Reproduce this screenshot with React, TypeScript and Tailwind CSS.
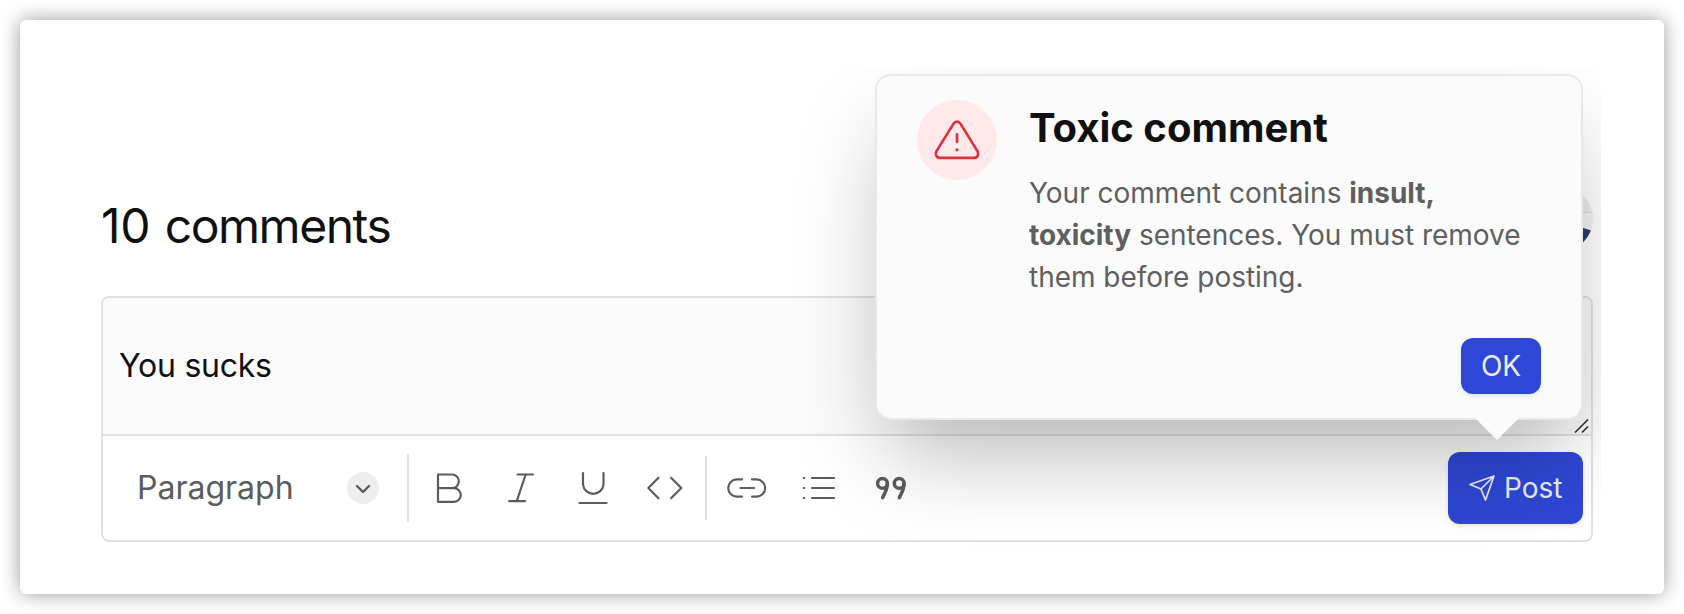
import React from "react";

const ico = "block h-[42px] w-[42px] shrink-0";

function Svg({ children, w = 2.2 }: { children: React.ReactNode; w?: number }) {
  return (
    <svg className={ico} viewBox="0 0 42 42" fill="none" stroke="currentColor" strokeWidth={w} strokeLinecap="round" strokeLinejoin="round">
      {children}
    </svg>
  );
}

function Toolbar() {
  return (
    <div className="flex h-[104px] items-center text-[#5c5c5c]">
      <div className="flex w-[304px] items-center pl-[34px]">
        <span className="w-[210px] text-[32px] leading-none">Paragraph</span>
        <span className="flex h-8 w-8 items-center justify-center rounded-full bg-[#eeeeee]">
          <svg className="h-8 w-8" viewBox="0 0 32 32" fill="none" stroke="currentColor" strokeWidth="2.4" strokeLinecap="round" strokeLinejoin="round">
            <path d="M10 14 L16 20 L22 14" />
          </svg>
        </span>
      </div>
      <div className="h-[68px] w-[2px] bg-[#e1e1e1]" />
      <div className="flex items-center gap-[30px] pl-[19px]">
        <Svg>
          <path d="M10 7.5 H24 A6.85 6.85 0 0 1 24 21.2 H10 M24 21.2 H26 A6.8 6.8 0 0 1 26 34.8 H10 V7.5" />
        </Svg>
        <Svg>
          <path d="M17.5 7.5 H33 M9.2 34.2 H25 M25.7 7.5 L16.7 34.2" />
        </Svg>
        <Svg>
          <path d="M11 6 V17.5 A10.3 10.3 0 0 0 31.5 17.5 V6 M7.5 36 H34.5" />
        </Svg>
        <Svg>
          <path d="M14.5 10.8 L4.3 21 L14.5 31.2 M27.1 10.8 L37.3 21 L27.1 31.2" />
        </Svg>
      </div>
      <div className="ml-[19px] h-16 w-[2px] bg-[#e1e1e1]" />
      <div className="flex items-center gap-[30px] pl-[19px]">
        <Svg>
          <path d="M16 12.4 H10.8 A8.6 8.6 0 0 0 10.8 29.6 H16 M26 12.4 H30.6 A8.6 8.6 0 0 1 30.6 29.6 H26 M14.6 21 H28" />
        </Svg>
        <Svg>
          <path d="M14 11 H36 M14 21 H36 M14 31 H36" />
          <path d="M6 11 h0.01 M6 21 h0.01 M6 31 h0.01" strokeLinecap="square" />
        </Svg>
        <Svg w={3.5}>
          <circle cx="12.5" cy="16.4" r="4.9" />
          <path d="M17.4 16.4 C17.4 22 15 26 12.6 30.6" />
          <circle cx="29.2" cy="16.4" r="4.9" />
          <path d="M34.1 16.4 C34.1 22 31.7 26 29.3 30.6" />
        </Svg>
      </div>
      <button className="mr-2 ml-auto flex h-[72px] w-[135px] items-center rounded-[12px] bg-[#2f47d6] pl-[20px] text-[28px] text-white/90 shadow-[0_2px_4px_rgba(0,0,0,0.1)]">
        <svg className="mr-[8px] h-7 w-7" viewBox="0 0 28 28" fill="none" stroke="currentColor" strokeWidth="1.7" strokeLinejoin="round">
          <path d="M26 2 L2 10.5 L13 15 L17.5 26 Z M13 15 L26 2" />
        </svg>
        <span className="leading-none">Post</span>
      </button>
    </div>
  );
}

function Avatar() {
  return (
    <svg className="h-16 w-16 rounded-full" viewBox="0 0 64 64">
      <rect width="64" height="64" fill="#ececec" />
      <rect y="25" width="64" height="39" fill="#f2f5f7" />
      <rect y="25" width="64" height="1" fill="#d6d8da" />
      <path d="M0 38 L54 41 L64 44 V64 H0 Z" fill="#2d3b6b" />
    </svg>
  );
}

function Popover() {
  return (
    <div className="absolute top-[7px] left-[855px] flex h-[346px] w-[708px] rounded-[16px] border-2 border-[#e8e8e8] bg-[#fbfbfb] pt-[24px] pl-[40px] shadow-[0_46px_92px_-15px_rgba(0,0,0,0.29)]">
      <div className="flex h-20 w-20 shrink-0 items-center justify-center rounded-full bg-[#ffe9ea]">
        <svg className="h-12 w-12" viewBox="0 0 48 48" fill="none" stroke="#e02f3f" strokeWidth="2.7" strokeLinecap="round" strokeLinejoin="round">
          <path d="M20.6 7.6 C22.2 5 25.8 5 27.4 7.6 L44.6 35.4 C46.2 38.2 44.6 41.8 41.4 41.8 H6.6 C3.4 41.8 1.8 38.2 3.4 35.4 Z" />
          <path d="M24 18.4 V26" />
          <circle cx="24" cy="33.8" r="1.6" fill="#e02f3f" stroke="none" />
        </svg>
      </div>
      <div className="flex w-[544px] flex-col pl-[32px]">
        <h2 className="mt-[4px] text-[40px] leading-[48px] font-bold text-[#101010]">Toxic comment</h2>
        <p className="mt-[20px] text-[28px] leading-[42px] tracking-[-0.02px] whitespace-nowrap text-[#5f5f5f]">
          Your comment contains <b className="font-bold">insult,</b>
          <br />
          <b className="font-bold">toxicity</b> sentences. You must remove
          <br />
          them before posting.
        </p>
        <button className="mt-[40px] ml-[432px] flex h-14 w-20 shrink-0 items-center justify-center rounded-[12px] bg-[#2f47d6] text-[28px] leading-none text-white/90 shadow-[0_2px_4px_rgba(0,0,0,0.1)]">OK</button>
      </div>
      <svg className="absolute top-[341px] left-[597px] h-[23px] w-[46px]" viewBox="0 0 46 23" fill="#fbfbfb">
        <path d="M0 0 H46 L23 23 Z" />
      </svg>
    </div>
  );
}

export default function App() {
  return (
    <div className="h-[614px] overflow-hidden bg-white p-5 font-['Inter',sans-serif]">
      <main className="h-[574px] rounded-[6px] bg-white pt-[47px] shadow-[0_0_20px_rgba(0,0,0,0.4)]">
        <section className="relative h-[527px] w-[1581px] overflow-hidden pt-[120px] pr-[8px] pl-[81px]">
          <header className="flex h-[85px] items-start justify-between">
            <h1 className="pt-[10px] text-[48px] leading-[58px] tracking-[-1.45px] text-[#101010] [word-spacing:2.2px]">
              <span className="tracking-[-0.2px]">10</span> comments
            </h1>
            <Avatar />
          </header>
          <div className="mt-[24px] h-[246px] overflow-hidden rounded-[8px] border-2 border-[#e1e1e1]">
            <div className="relative h-[138px] border-b-2 border-[#e1e1e1] bg-[#fbfbfb] px-4 pt-[48px] text-[32px] leading-[40px] tracking-[-0.25px] text-[#101010]">
              You sucks
              <svg className="absolute right-px bottom-0 h-4 w-4" viewBox="0 0 16 16" stroke="#333" strokeWidth="1.7">
                <path d="M1 14.5 L14 1.5 M8 14.5 L14 8.5" />
              </svg>
            </div>
            <Toolbar />
          </div>
          <Popover />
        </section>
      </main>
    </div>
  );
}
